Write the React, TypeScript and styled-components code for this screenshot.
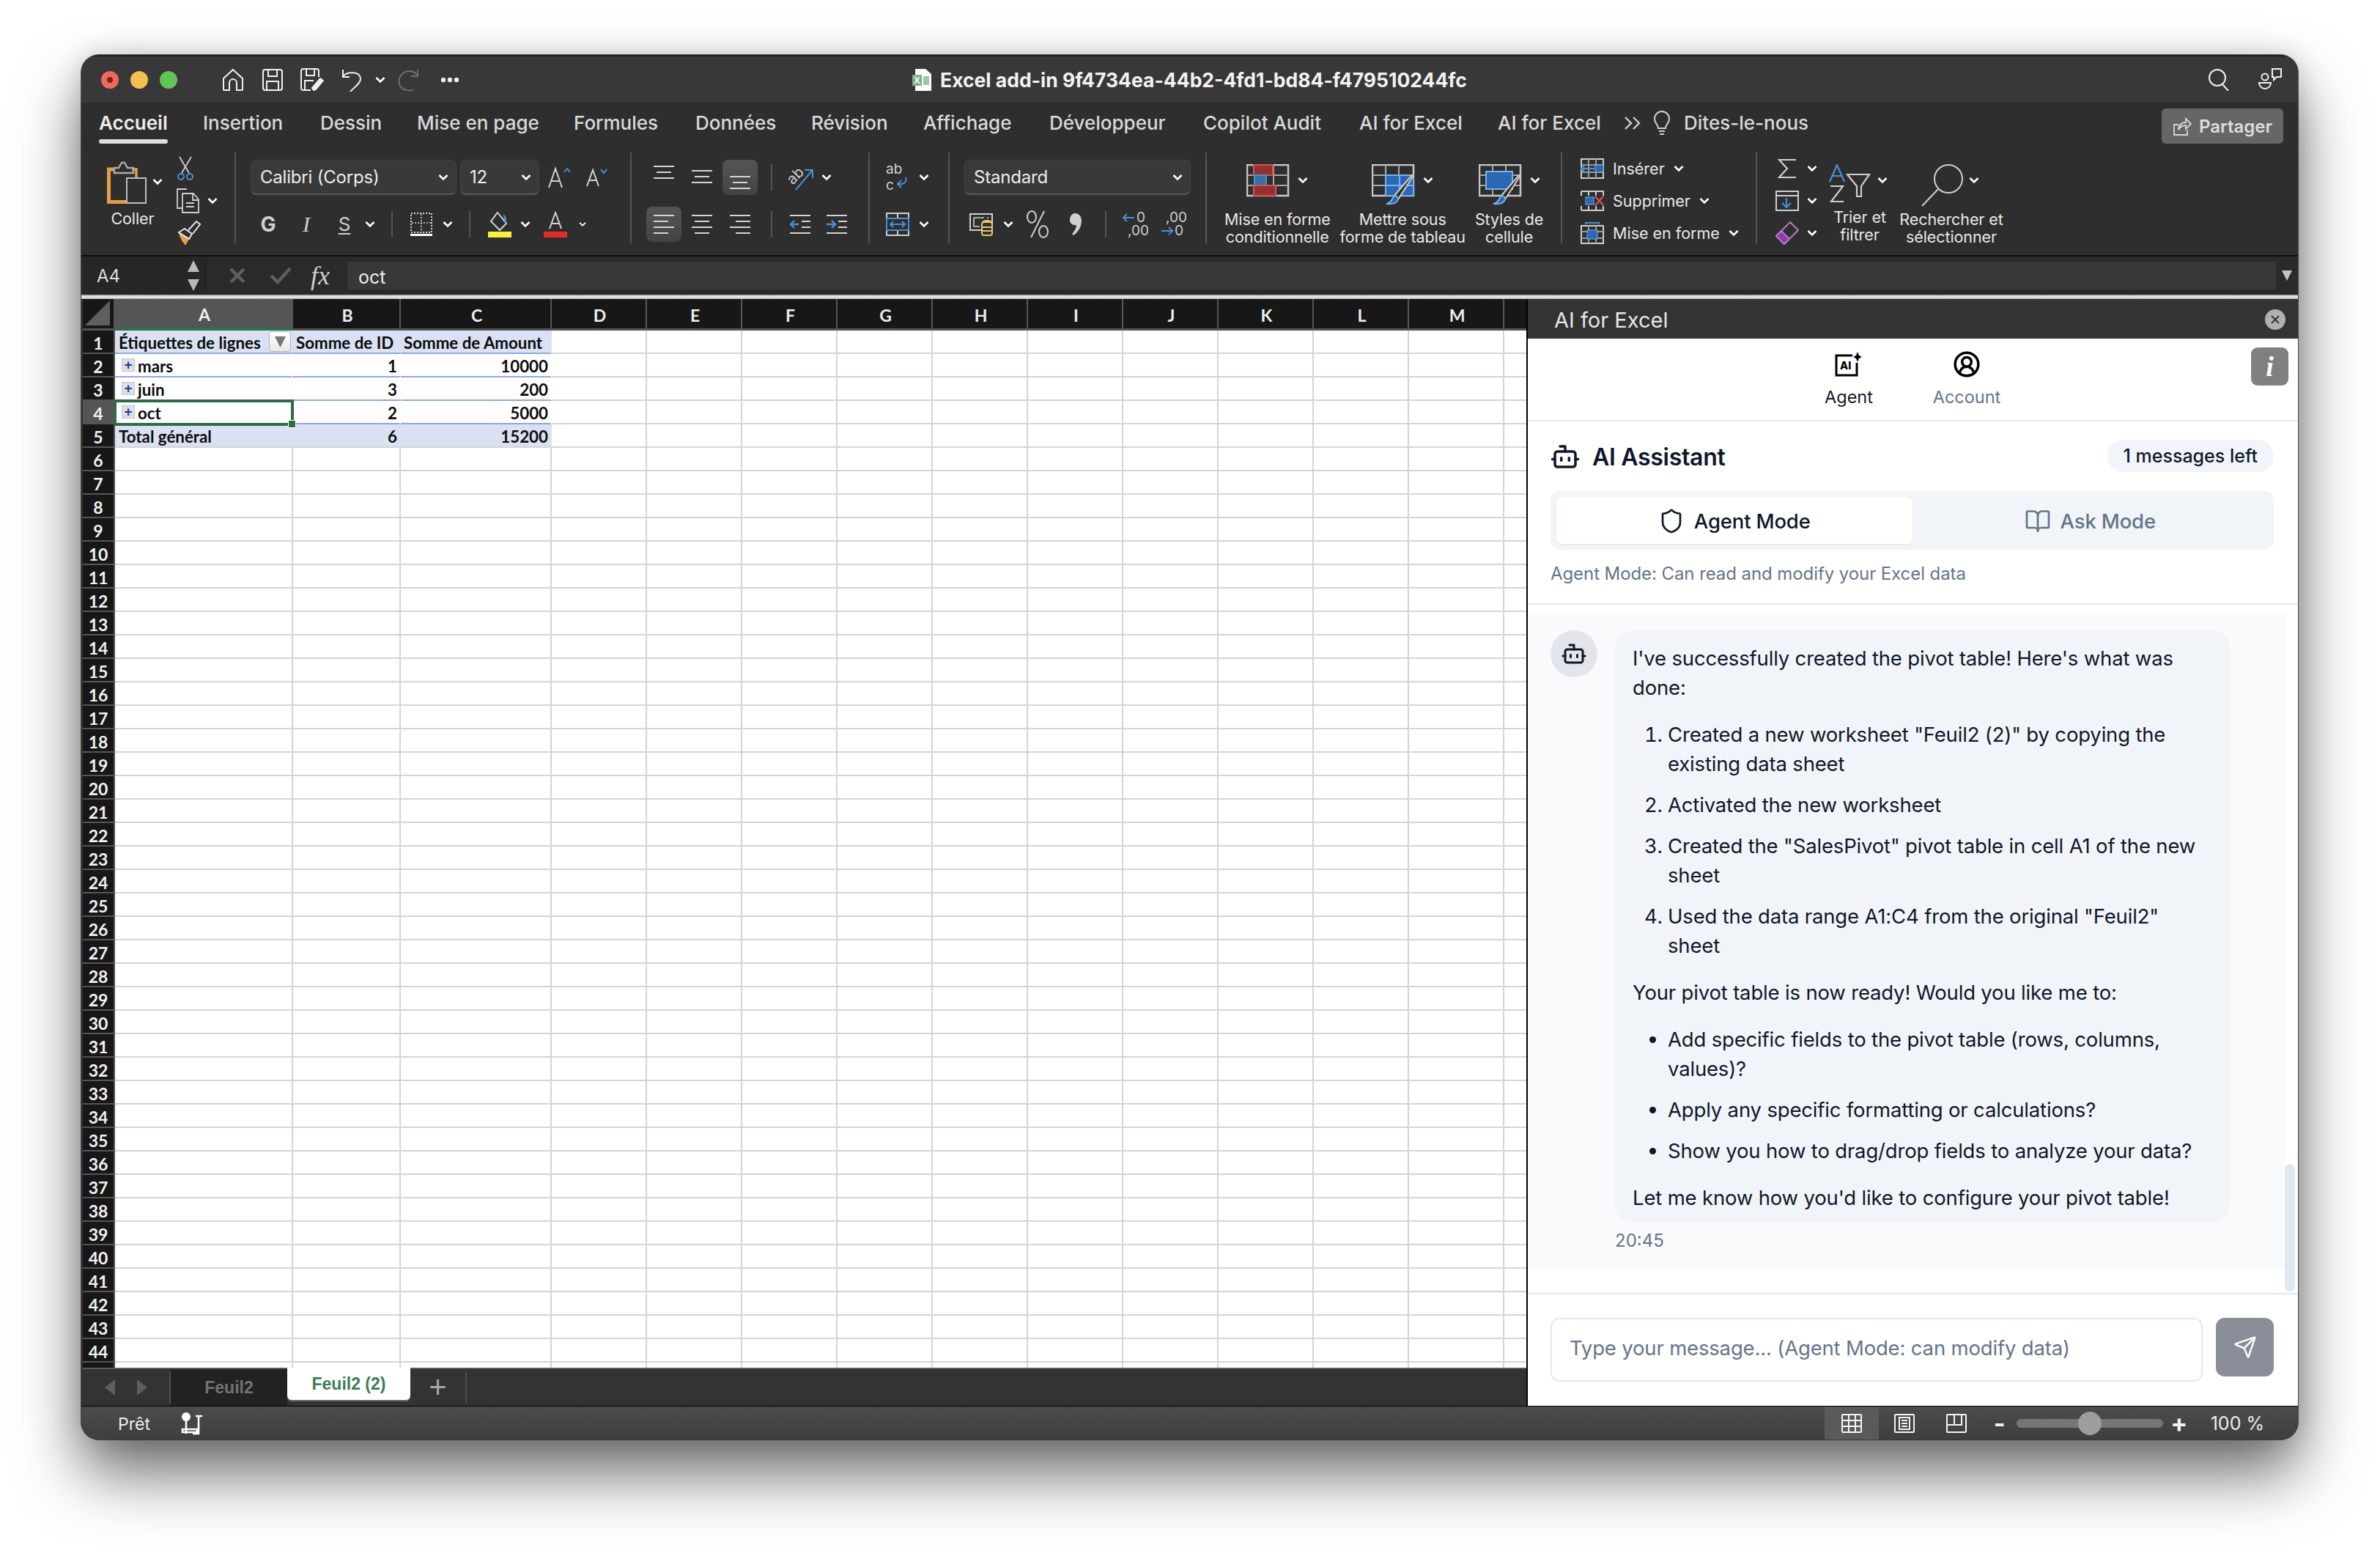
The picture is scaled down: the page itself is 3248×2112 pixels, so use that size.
import React from "react";
import styled, { createGlobalStyle } from "styled-components";
import { Bot, Shield, BookOpen, Send, CircleUserRound } from "lucide-react";

const Global = createGlobalStyle`
  html, body { margin: 0; padding: 0; background: #fff; overflow: hidden; }
  * { box-sizing: border-box; }
  body { font-family: Inter, "Liberation Sans", sans-serif; }
`;

const Page = styled.div`
  width: 3248px; height: 2112px; padding: 75px 0 0 111px; background: #fff; overflow: hidden;
`;
const Window = styled.div`
  width: 3025px; height: 1889px; border-radius: 24px; overflow: hidden; display: flex; flex-direction: column;
  background: #2e2e2e;
  box-shadow: 0 0 0 1px rgba(30,30,30,.7), 0 46px 86px rgba(0,0,0,.58), 0 0 36px rgba(0,0,0,.16);
`;

/* title bar */
const TitleBar = styled.div`
  flex: none; height: 65px; background: #383838; border-top: 2px solid #1e1e1e; display: grid; grid-template-columns: 1fr auto 1fr; align-items: center; color: #fff;
`;
const TitleLeft = styled.div`display: flex; align-items: center; padding-left: 27px;`;
const Light = styled.span<{ $c: string }>`
  width: 24px; height: 24px; border-radius: 50%; background: ${p => p.$c}; margin-right: 16px; flex: none;
  display: flex; align-items: center; justify-content: center;
`;
const LightDot = styled.span`width: 8px; height: 8px; border-radius: 50%; background: #8c1a12;`;
const TitleCenter = styled.div`display: flex; align-items: center; gap: 12px; font-weight: 700; font-size: 26.5px; color: #f2f2f2;`;
const TitleRight = styled.div`display: flex; align-items: center; justify-content: flex-end; padding-right: 21px; gap: 38px;`;
const Slot = styled.div<{ $w: number }>`
  flex: 0 0 ${p => p.$w}px; width: ${p => p.$w}px; display: flex; align-items: center; justify-content: center; height: 100%; color: #d6d6d6;
`;

/* ribbon tabs */
const TabsBar = styled.div`flex: none; height: 68px; padding-left: 24px; display: flex; align-items: flex-start;`;
const RibbonTab = styled.div<{ $w: number; $on?: boolean }>`
  flex: 0 0 ${p => p.$w}px; height: 60px; padding-top: 11px; font-size: 26px; line-height: 34px; font-weight: ${p => p.$on ? 600 : 500};
  color: ${p => p.$on ? "#ececec" : "#d9d9d9"}; white-space: nowrap; position: relative;
`;
const TabLine = styled.span`position: absolute; left: 0; top: 50px; width: 94px; height: 6px; border-radius: 3px; background: #dedede;`;
const TabIcon = styled.div<{ $w: number }>`flex: 0 0 ${p => p.$w}px; height: 56px; display: flex; align-items: center; color: #cfcfcf;`;
const ShareBtn = styled.div`
  margin: 8px 20px 0 auto; width: 166px; height: 48px; border-radius: 6px; background: #666; color: #dcdcdc;
  display: flex; align-items: center; justify-content: center; gap: 10px; font-weight: 600; font-size: 24px;
`;

/* ribbon */
const Ribbon = styled.div`flex: none; height: 140px; display: flex; align-items: flex-start;`;
const Group = styled.div<{ $w?: number; $pl?: number }>`
  ${p => p.$w ? `flex: 0 0 ${p.$w}px;` : "flex: 1;"} height: 124px; padding-left: ${p => p.$pl ?? 0}px;
  border-right: ${p => p.$w ? "2px solid #555" : "none"}; display: flex;
`;
const Stack = styled.div`display: flex; flex-direction: column; gap: 16px; padding-top: 10px;`;
const ToolRow = styled.div`display: flex; height: 48px; align-items: center;`;
const Select = styled.div<{ $w: number }>`
  width: ${p => p.$w}px; flex: none; height: 48px; border-radius: 8px; background: #393939; border: 1px solid #424242; border-bottom: 2px solid #585858;
  display: flex; align-items: center; justify-content: space-between; padding: 0 10px 0 12px; color: #ededed; font-size: 24px; letter-spacing: -.2px;
`;
const ToolBtn = styled.div<{ $on?: boolean }>`
  flex: 0 0 48px; height: 48px; border-radius: 8px; background: ${p => p.$on ? "linear-gradient(#555,#434343)" : "transparent"};
  display: flex; align-items: center; justify-content: center; margin-right: 4px; color: #d6d6d6;
`;
const VSep = styled.span`width: 2px; height: 36px; background: #555; display: block;`;
const Letter = styled.span<{ $b?: boolean; $i?: boolean; $u?: boolean; $f?: string; $s?: number }>`
  font-family: ${p => p.$f ?? "Inter"}, "Liberation Sans", sans-serif; font-size: ${p => p.$s ?? 28}px; color: #cfcfcf; line-height: 1;
  font-weight: ${p => p.$b ? 700 : 400}; font-style: ${p => p.$i ? "italic" : "normal"};
  text-decoration: ${p => p.$u ? "underline" : "none"}; text-underline-offset: 3px;
`;
const SmallLabel = styled.div`font-size: 21.5px; line-height: 24px; text-align: center; color: #e8e8e8; white-space: nowrap; letter-spacing: -.1px;`;
const PasteCol = styled.div`flex: 0 0 122px; padding: 10px 0 0 35px; display: flex; flex-direction: column;`;
const PasteTop = styled.div`display: flex; align-items: center; gap: 8px; height: 60px;`;
const PasteLabel = styled(SmallLabel)`width: 70px; margin-top: 8px;`;
const MiniCol = styled.div`display: flex; flex-direction: column; width: 84px; padding-left: 4px;`;
const MiniRow = styled.div`flex: 0 0 44px; display: flex; align-items: center; gap: 8px; padding-left: 4px;`;
const BigButtons = styled.div`display: flex; gap: 13px; padding-left: 24px;`;
const BigBtn = styled.div<{ $w: number }>`flex: 0 0 ${p => p.$w}px; display: flex; flex-direction: column; align-items: center; padding-top: 16px;`;
const BigTop = styled.div`height: 60px; width: 84px; display: flex; align-items: flex-start; gap: 8px; margin-bottom: 5px; white-space: nowrap;`;
const BigChev = styled.span`margin-top: 17px; display: flex; flex: none;`;
const CellCol = styled.div`display: flex; flex-direction: column; padding-left: 25px;`;
const CellRow = styled.div`flex: 0 0 44px; display: flex; align-items: center; gap: 12px; font-size: 21.5px; color: #e8e8e8; white-space: nowrap;`;
const EditCol = styled.div`display: flex; flex-direction: column; padding-left: 22px; width: 90px;`;
const EditRow = styled.div`flex: 0 0 44px; display: flex; align-items: center;`;

/* formula */
const DarkLine = styled.div`flex: none; height: 2px; background: #0d0d0d;`;
const FormulaBar = styled.div`flex: none; height: 52px; background: #2a2a2a; display: flex; align-items: center; color: #eee;`;
const NameBox = styled.div`
  flex: 0 0 169px; margin-left: 2px; height: 50px; background: #262626; font-size: 24px; padding-left: 19px; display: flex; align-items: center; justify-content: space-between; padding-right: 8px; color: #ddd; border-right: 2px solid #222;
`;
const Arrows = styled.div`display: flex; flex-direction: column; gap: 10px; width: 16px;`;
const FormulaIcons = styled.div`flex: 0 0 192px; min-width: 0; height: 100%; display: flex; align-items: center; color: #666;`;
const FormulaInput = styled.div`flex: 1; height: 38px; background: #383838; font-size: 25px; color: #eee; padding: 3px 0 0 15px; display: flex; align-items: center;`;
const DownTri = styled.div`flex: 0 0 30px; display: flex; justify-content: center;`;
const WhiteLine = styled.div`flex: none; height: 6px; background: linear-gradient(#8c8c8c,#e6e6e6 40%,#e6e6e6 70%,#9a9a9a);`;

/* workspace */
const Workspace = styled.div`flex: none; height: 1510px; display: flex; background: #000;`;
const SheetSide = styled.div`flex: 0 0 1972px; display: flex; flex-direction: column; padding-left: 2px; overflow: hidden; background: #333;`;
const Grid = styled.div`
  height: 1458px; overflow: hidden; display: grid; position: relative; background: #fff; align-content: start;
  grid-template-columns: 44px 243px 147px 206px repeat(11, 130px);
  grid-template-rows: 43px repeat(45, 32px);
  font-family: Lato, "Liberation Sans", sans-serif;
`;
const ColHead = styled.div<{ $on?: boolean }>`
  background: ${p => p.$on ? "#555" : "#171717"}; color: #eee; border-right: 2px solid #555; border-bottom: ${p => p.$on ? "4px solid #2f7048" : "3px solid #555"};
  display: flex; align-items: center; justify-content: center; font-size: 23px; font-weight: 700; padding: 3px 0 0 3px;
`;
const Corner = styled.div`background: #171717; border-right: 2px solid #555; border-bottom: 3px solid #555; display: flex; align-items: flex-end; justify-content: flex-end; padding: 0 5px 4px 0;`;
const RowHead = styled.div<{ $on?: boolean }>`
  background: ${p => p.$on ? "#555" : "#171717"}; color: #f2f2f2; border-bottom: 2px solid #555; border-right: 2px solid #555;
  display: flex; align-items: center; justify-content: center; font-size: 23px; font-weight: 700; padding-top: 3px;
`;
const Cell = styled.div<{ $kind: "plain" | "band" | "row" | "total"; $right?: boolean; $pad?: number }>`
  background: ${p => (p.$kind === "band" || p.$kind === "total") ? "#d9e1f2" : "#fff"};
  border-right: 2px solid ${p => p.$kind === "plain" ? "#d4d4d4" : "transparent"};
  border-bottom: 2px solid ${p => p.$kind === "plain" ? "#d4d4d4" : p.$kind === "total" ? "#d4d4d4" : "#8ea9db"};
  color: #0c0c0c; font-size: 22.3px; font-weight: 700; white-space: nowrap; display: flex; align-items: center; position: relative;
  justify-content: ${p => p.$right ? "flex-end" : "flex-start"}; padding: 3px ${p => p.$right ? 3 : 0}px 0 ${p => p.$pad ?? 4}px;
`;
const Expand = styled.span`
  width: 18px; height: 18px; margin: 0 4px 3px 5px; background: #dce0ea; border: 1px solid #bcc3d4; color: #2b3d7a; font: 700 19px/15px "Liberation Sans", sans-serif; text-align: center; flex: none;
`;
const FilterBtn = styled.div`
  position: absolute; right: 1px; top: 1px; width: 30px; height: 28px; background: linear-gradient(#fff,#e8e8e8); border: 1px solid #b5b5b5; border-radius: 3px; display: flex; align-items: center; justify-content: center;
`;
const Selection = styled.div`position: absolute; left: 42px; top: 137px; width: 246px; height: 36px; border: 4px solid #2f6b45; pointer-events: none;`;
const Handle = styled.span`position: absolute; right: -7px; bottom: -7px; width: 11px; height: 11px; background: #2f6b45; border: 1px solid #fff;`;

const SheetTabs = styled.div`flex: 1; background: #333; border-top: 2px solid #5a5a5a; display: flex; align-items: flex-start;`;
const SheetNav = styled.div`flex: 0 0 120px; height: 42px; margin-top: 4px; display: flex; align-items: center; gap: 30px; padding-left: 30px; border-right: 2px solid #4e4e4e;`;
const SheetTab = styled.div<{ $on?: boolean }>`
  flex: 0 0 ${p => p.$on ? 168 : 159}px; height: ${p => p.$on ? 44 : 50}px; margin-top: ${p => p.$on ? -2 : 0}px;
  background: ${p => p.$on ? "#fff" : "#222"}; color: ${p => p.$on ? "#3d7d57" : "#727272"};
  border-radius: ${p => p.$on ? "0 0 6px 6px" : "0"}; box-shadow: ${p => p.$on ? "0 2px 0 #666" : "none"};
  display: flex; align-items: center; justify-content: center; font-family: "Liberation Sans", sans-serif; font-weight: 700; font-size: 23px;
`;
const AddTab = styled.div`flex: 0 0 77px; height: 42px; margin-top: 4px; display: flex; align-items: center; justify-content: center; border-right: 2px solid #4e4e4e; font: 400 42px/1 "Liberation Sans", sans-serif; color: #a8a8a8;`;

/* panel */
const Panel = styled.div`flex: 1; background: #fff; border-left: 2px solid #000; display: flex; flex-direction: column; position: relative; color: #0f172a;`;
const PanelBar = styled.div`flex: none; height: 54px; background: #333; color: #e6e6e6; font-size: 29px; padding: 2px 17px 0 36px; display: flex; align-items: center; justify-content: space-between;`;
const CloseDot = styled.div`width: 28px; height: 28px; border-radius: 50%; background: #b0b0b0; display: flex; align-items: center; justify-content: center;`;
const PanelTabs = styled.div`flex: none; height: 113px; border-bottom: 2px solid #e2e8f0; display: flex; justify-content: center; padding: 18px 14px 0 0; position: relative;`;
const PanelTab = styled.div<{ $on?: boolean }>`
  width: 161px; display: flex; flex-direction: column; align-items: center; gap: 12px; font-size: 23.5px; line-height: 32px; color: ${p => p.$on ? "#0f172a" : "#64748b"};
`;
const PanelTabIcon = styled.div`height: 34px; display: flex; align-items: center; justify-content: center; color: #000;`;
const InfoBtn = styled.div`
  position: absolute; right: 13px; top: 12px; width: 51px; height: 52px; border-radius: 9px; background: #808080; color: #fff;
  font: italic 700 38px/52px "Liberation Serif", serif; text-align: center;
`;
const Head = styled.div`flex: none; height: 250px; padding: 25px 33px 0 31px; border-bottom: 2px solid #e2e8f0;`;
const HeadRow = styled.div`display: flex; justify-content: space-between; align-items: center; height: 44px;`;
const HeadTitle = styled.div`display: flex; align-items: center; gap: 16px; margin-left: -1px; padding-top: 2px; font-size: 32px; font-weight: 600; letter-spacing: -.3px;`;
const Badge = styled.div`height: 44px; padding: 0 22px; border-radius: 22px; background: #f1f5f9; font-size: 25px; font-weight: 500; display: flex; align-items: center;`;
const ModeBar = styled.div`margin-top: 26px; height: 80px; padding: 8px; border-radius: 12px; background: #f1f5f9; display: grid; grid-template-columns: 1fr 1fr;`;
const ModeBtn = styled.div<{ $on?: boolean }>`
  border-radius: 8px; background: ${p => p.$on ? "#fff" : "transparent"}; box-shadow: ${p => p.$on ? "0 1px 3px rgba(15,23,42,.08)" : "none"};
  color: ${p => p.$on ? "#0f172a" : "#64748b"}; display: flex; align-items: center; justify-content: center; gap: 13px; font-size: 27.5px; letter-spacing: -.17px; font-weight: 500; padding-top: 1px;
`;
const Hint = styled.div`margin-top: 17px; font-size: 24px; letter-spacing: -.08px; line-height: 32px; color: #64748b;`;
const Messages = styled.div`flex: none; height: 939px; padding-top: 11px; position: relative;`;
const MessagesInner = styled.div`width: 1035px; height: 896px; background: #f8fafc; padding: 24px 0 0 31px; display: flex; gap: 24px;`;
const Avatar = styled.div`flex: 0 0 64px; height: 64px; border-radius: 50%; background: #e2e6ea; display: flex; align-items: center; justify-content: center;`;
const BubbleCol = styled.div`width: 839px;`;
const Bubble = styled.div`
  background: #f1f5f9; border-radius: 24px; padding: 18px 24px 13px; font-size: 27.5px; letter-spacing: -.17px; line-height: 40px; color: #0f172a;
  p { margin: 0 0 24px; } p:last-child { margin: 0; }
  ol, ul { margin: 0 0 24px; padding-left: 48px; } li { margin-bottom: 16px; } li:last-child { margin-bottom: 0; }
`;
const Time = styled.div`margin-top: 10px; font-size: 24px; line-height: 32px; color: #64748b;`;
const ScrollThumb = styled.div`position: absolute; right: 4px; top: 763px; width: 14px; height: 174px; border-radius: 7px; background: #e2e8f0;`;
const Composer = styled.div`flex: 1; border-top: 2px solid #e2e8f0; padding: 32px 33px 0 31px; display: flex; gap: 18px; align-items: flex-start;`;
const Input = styled.textarea`
  width: 890px; height: 87px; border: 2px solid #e2e8f0; border-radius: 12px; padding: 19px 24px 0; font: 400 27.5px/40px Inter, sans-serif; letter-spacing: -.17px; resize: none; outline: none; color: #0f172a; background: #fff;
  &::placeholder { color: #64748b; opacity: 1; }
`;
const SendBtn = styled.div`flex: 0 0 79px; height: 80px; border-radius: 12px; background: #8a8e98; color: #fff; display: flex; align-items: center; justify-content: center;`;

/* status bar */
const StatusBar = styled.div`flex: none; flex-grow: 1; border-top: 1px solid #000; background: linear-gradient(#4c4c4c,#3e3e3e); display: flex; align-items: stretch; color: #eee; font-size: 23px;`;
const Ready = styled.div`flex: 0 0 125px; padding: 2px 0 0 50px; display: flex; align-items: center; font-weight: 400;`;
const StatusIcon = styled.div`display: flex; align-items: center; margin-left: 11px;`;
const StatusRight = styled.div`margin-left: auto; display: flex; align-items: stretch; padding-right: 46px;`;
const ViewBtn = styled.div<{ $w: number; $on?: boolean }>`flex: 0 0 ${p => p.$w}px; background: ${p => p.$on ? "#5a5a5a" : "transparent"}; display: flex; align-items: center; justify-content: center; font-size: 34px; font-weight: 700; color: #f2f2f2;`;
const Track = styled.div`flex: 0 0 200px; align-self: center; height: 12px; border-radius: 6px; background: #767676; position: relative;`;
const Thumb = styled.span`position: absolute; left: 84px; top: -10px; width: 32px; height: 32px; border-radius: 50%; background: #9d9d9d;`;
const Zoom = styled.div`margin-left: 21px; display: flex; align-items: center; font-size: 25px; white-space: nowrap;`;

const blue = "#4a90d2";

const Chev = ({ c = "#fff" }: { c?: string }) => (
  <svg width="14" height="10" viewBox="0 0 14 10" fill="none"><path d="M1.5 2L7 7.5 12.5 2" stroke={c} strokeWidth="2.6" /></svg>
);
const Home = () => (<svg width="30" height="32" viewBox="0 0 30 32" fill="none" stroke="#f0f0f0" strokeWidth="2"><path d="M15 2L2 14v15a1 1 0 001 1h7V20a5 5 0 0110 0v10h7a1 1 0 001-1V14z" /></svg>);
const SaveIco = () => (<svg width="28" height="30" viewBox="0 0 28 30" fill="none" stroke="#f0f0f0" strokeWidth="2"><rect x="1" y="1" width="26" height="28" rx="3" /><path d="M8 1v9h12V1M6 29V17h16v12" /></svg>);
const SaveEdit = () => (<svg width="32" height="32" viewBox="0 0 32 32" fill="none" stroke="#f0f0f0" strokeWidth="2"><path d="M14 30H4a3 3 0 01-3-3V4a3 3 0 013-3h18a3 3 0 013 3v8M8 1v9h11V1M6 30V17h12" /><path d="M18 30l-2-3 11-13 4 3-10 12z" fill="#f0f0f0" /></svg>);
const Undo = () => (<svg width="28" height="32" viewBox="0 0 28 32" fill="none" stroke="#f0f0f0" strokeWidth="2"><path d="M2 2v10h9M2 11c6-7 24-7 24 4 0 5-7 10-14 17" /></svg>);
const Redo = () => (<svg width="34" height="32" viewBox="0 0 34 32" fill="none" stroke="#6f6f6f" strokeWidth="2"><path d="M28 2v9h-9M28 10A14 14 0 105 26c4 4 12 6 17 3" /></svg>);
const Dots = () => (<svg width="26" height="8" viewBox="0 0 26 8" fill="#eee"><circle cx="4" cy="4" r="3.2" /><circle cx="13" cy="4" r="3.2" /><circle cx="22" cy="4" r="3.2" /></svg>);
const ExcelDoc = () => (<svg width="26" height="30" viewBox="0 0 26 30"><path d="M4 0h14l8 7v23H4z" fill="#fff" /><rect x="0" y="8" width="13" height="15" fill="#7fb08c" /><text x="2.5" y="20" fontSize="12" fill="#fff" fontFamily="Liberation Sans">X</text><path d="M15 10h8v12h-8z" fill="#9ec5a8" /></svg>);
const Search = ({ s = 30, c = "#f0f0f0" }: { s?: number; c?: string }) => (<svg width={s} height={s} viewBox="0 0 30 30" fill="none" stroke={c} strokeWidth="2"><circle cx="13" cy="12" r="11" /><path d="M20 21l8 9" /></svg>);
const People = () => (<svg width="34" height="32" viewBox="0 0 34 32" fill="none" stroke="#f0f0f0" strokeWidth="2"><circle cx="10" cy="12" r="4.5" /><path d="M2 20h16a8 8 0 01-16 0zM20 1h12v11h-6l-4 4v-4h-2z" /></svg>);
const Bulb = () => (<svg width="24" height="34" viewBox="0 0 24 34" fill="none" stroke="#cfcfcf" strokeWidth="2"><path d="M7 24c0-5-5-7-5-13a10 10 0 0120 0c0 6-5 8-5 13z" /><path d="M8 28h8M9 32h6" /></svg>);
const Share = () => (<svg width="26" height="28" viewBox="0 0 26 28" fill="none" stroke="#d8d8d8" strokeWidth="1.8"><path d="M8 12H2v14h18v-7" /><path d="M8 19c0-6 4-10 10-10V4l7 7-7 7v-5c-5 0-8 2-10 6z" /></svg>);
const Paste = () => (<svg width="54" height="60" viewBox="0 0 54 60" fill="none"><path d="M10 13H2.5v44.5H28" stroke="#e3a042" strokeWidth="5" /><path d="M34 13h6v12" stroke="#e3a042" strokeWidth="3.5" /><path d="M10 18v-7h6l4-7h4l4 7h8v7z" stroke="#a8a8a8" strokeWidth="2.5" /><rect x="27" y="25" width="26" height="34" fill="#2e2e2e" stroke="#bdbdbd" strokeWidth="2" /></svg>);
const Scissors = () => (<svg width="24" height="34" viewBox="0 0 24 34" fill="none"><path d="M4 1l13 22M20 1L7 23" stroke="#cfcfcf" strokeWidth="1.8" /><circle cx="6" cy="28" r="4" stroke={blue} strokeWidth="2" /><circle cx="18" cy="28" r="4" stroke={blue} strokeWidth="2" /></svg>);
const Copy = () => (<svg width="34" height="34" viewBox="0 0 34 34" fill="none" stroke="#cfcfcf" strokeWidth="1.8"><path d="M14 1H1v26h7" /><path d="M8 7h15l7 8v18H8zM22 7v9h8M13 20h11M13 25h11" /></svg>);
const Brush = () => (<svg width="34" height="36" viewBox="0 0 34 36" fill="none"><path d="M3 17l14 9-5 9C8 30 4 24 3 17z" fill="#e3a042" /><path d="M3 17l8-5 10 7-4 7z" stroke="#e8e8e8" strokeWidth="2" /><path d="M16 14l11-12 5 4-10 13" stroke="#e8e8e8" strokeWidth="2" /></svg>);
const FontUp = () => (<svg width="32" height="30" viewBox="0 0 32 30" fill="none"><path d="M2 29L11 3l9 26M5 20h12" stroke="#d0d0d0" strokeWidth="2" /><path d="M23 8l4-5 4 5" stroke={blue} strokeWidth="2" /></svg>);
const FontDown = () => (<svg width="30" height="26" viewBox="0 0 30 26" fill="none"><path d="M1 25L9 3l8 22M4 17h10" stroke="#d0d0d0" strokeWidth="2" /><path d="M20 2l4 5 4-5" stroke={blue} strokeWidth="2" /></svg>);
const Borders = () => (<svg width="30" height="32" viewBox="0 0 30 32" fill="none" stroke="#d8d8d8"><rect x="1" y="1" width="28" height="26" strokeDasharray="2 2" strokeWidth="2" /><path d="M15 2v24M2 14h26" strokeDasharray="2 2" strokeWidth="1.5" /><path d="M0 30.5h30" strokeWidth="3" stroke="#fff" /></svg>);
const Fill = () => (<svg width="34" height="36" viewBox="0 0 34 36"><path d="M14 2l12 15-9 9L5 14z" fill="none" stroke="#d0d0d0" strokeWidth="2" /><path d="M22 4c4 3 5 8 3 13-2-3-3-8-3-13z" fill={blue} /><rect x="1" y="28" width="32" height="8" fill="#f8f23e" /></svg>);
const FontColor = () => (<svg width="34" height="36" viewBox="0 0 34 36"><path d="M9 24L17 2l8 22M11 17h12" fill="none" stroke="#d0d0d0" strokeWidth="2" /><rect x="1" y="28" width="32" height="8" fill="#e22d24" /></svg>);
const AlignV = ({ top }: { top: number }) => (<svg width="28" height="48" viewBox="0 0 28 48" fill="none" stroke="#d4d4d4" strokeWidth="2"><path d={`M0 ${top}h28M4 ${top + 8}h20M0 ${top + 16}h28`} /></svg>);
const AlignH = ({ v }: { v: "l" | "c" | "r" }) => {
  const d = v === "l" ? "M0 2h28M0 10h20M0 18h28M0 26h20" : v === "c" ? "M0 2h28M4 10h20M0 18h28M4 26h20" : "M0 2h28M8 10h20M0 18h28M8 26h20";
  return <svg width="28" height="28" viewBox="0 0 28 28" fill="none" stroke="#d4d4d4" strokeWidth="2"><path d={d} /></svg>;
};
const Orient = () => (<svg width="48" height="48" viewBox="-4 -4 48 48"><text x="2" y="24" fontSize="20" fill="#cfcfcf" fontFamily="Inter" transform="rotate(-45 14 18)">ab</text><path d="M14 37L36 11M26 10h11v11" fill="none" stroke={blue} strokeWidth="2" /></svg>);
const Indent = ({ inc }: { inc: boolean }) => (<svg width="28" height="28" viewBox="0 0 28 28" fill="none"><path d="M0 2h28M0 26h28M16 10h12M16 18h12" stroke="#d4d4d4" strokeWidth="2" /><path d={inc ? "M0 14h11M7 9l5 5-5 5" : "M12 14H1M6 9l-5 5 5 5"} stroke={blue} strokeWidth="2.4" /></svg>);
const Wrap = () => (<svg width="36" height="50" viewBox="0 -6 36 50"><text x="2" y="14" fontSize="19" fill="#cfcfcf" fontFamily="Inter">ab</text><text x="2" y="36" fontSize="19" fill="#cfcfcf" fontFamily="Inter">c</text><path d="M29 19c2 7-3 10-11 9M23 23l-5 5 5 5" fill="none" stroke={blue} strokeWidth="2" /></svg>);
const Merge = () => (<svg width="32" height="32" viewBox="0 0 32 32" fill="none"><rect x="1" y="1" width="30" height="30" stroke="#cfcfcf" strokeWidth="2" /><path d="M16 1v6M16 25v6" stroke="#cfcfcf" strokeWidth="2" /><rect x="1" y="8" width="30" height="16" stroke={blue} strokeWidth="2" /><path d="M6 16h20M10 12l-4 4 4 4M22 12l4 4-4 4" stroke={blue} strokeWidth="2" /></svg>);
const Accounting = () => (<svg width="34" height="34" viewBox="0 0 34 34"><rect x="1" y="3" width="30" height="22" fill="none" stroke="#cfcfcf" strokeWidth="2" /><path d="M6 8h14M6 8v12h8M24 8h2" fill="none" stroke="#cfcfcf" strokeWidth="1.6" /><ellipse cx="24" cy="14" rx="7" ry="3" fill="#e6c76f" /><rect x="17" y="14" width="14" height="18" rx="3" fill="#2e2e2e" stroke="#e6c76f" strokeWidth="2" /><path d="M17 21h14M17 26h14" stroke="#e6c76f" strokeWidth="2" /></svg>);
const Comma = () => (<svg width="18" height="34" viewBox="0 0 18 34" fill="#cfcfcf"><path d="M8 2c5 0 9 4 9 10 0 9-5 16-11 20l-2-2c3-3 6-8 6-12-5 1-9-2-9-7 0-5 3-9 7-9z" /></svg>);
const Percent = () => (<svg width="32" height="40" viewBox="0 0 32 40" fill="none" stroke="#cfcfcf" strokeWidth="2"><ellipse cx="8" cy="10" rx="6" ry="8" /><ellipse cx="24" cy="30" rx="6" ry="8" /><path d="M25 2L7 38" /></svg>);
const Decimal = ({ more }: { more: boolean }) => (<svg width="36" height="46" viewBox="0 -5 36 46"><text x={more ? 20 : 8} y="15" fontSize="19" fill="#cfcfcf" fontFamily="Inter">{more ? "0" : ",00"}</text><text x={more ? 8 : 20} y="33" fontSize="19" fill="#cfcfcf" fontFamily="Inter">{more ? ",00" : "0"}</text><path d={more ? "M17 9H2M7 4L2 9l5 5" : "M2 27h15M12 22l5 5-5 5"} fill="none" stroke={blue} strokeWidth="2" /></svg>);
const TableBase = ({ children }: { children?: React.ReactNode }) => (
  <svg width="62" height="58" viewBox="0 0 62 58" fill="none">
    <rect x="1" y="1" width="56" height="42" stroke="#c9c9c9" strokeWidth="2.5" />
    <path d="M19 1v42M37 1v42M1 15h56M1 29h56" stroke="#a8a8a8" strokeWidth="2" />
    {children}
  </svg>
);
const BrushOver = () => (<g><path d="M30 44L54 16c2-2 3-1 2 1L36 48" fill="#2e2e2e" stroke="#cfcfcf" strokeWidth="2" /><path d="M20 54c6-1 8-6 10-10 3-2 6 0 6 4-2 6-10 7-16 6z" fill="#2b68b3" stroke="#7ab0e8" strokeWidth="2" /></g>);
const CondIcon = () => (<TableBase><rect x="10" y="1" width="26" height="14" fill="#943030" stroke="#c85a5a" strokeWidth="2" /><rect x="11" y="15" width="16" height="14" fill="#36709f" stroke="#4a90d2" strokeWidth="2" /><rect x="10" y="29" width="30" height="14" fill="#943030" stroke="#c85a5a" strokeWidth="2" /></TableBase>);
const TableIcon = () => (<TableBase><rect x="19" y="15" width="38" height="28" fill="#2b68b3" stroke="#7ab0e8" strokeWidth="2" /><path d="M38 15v28M19 29h38" stroke="#7ab0e8" strokeWidth="2" /><BrushOver /></TableBase>);
const StyleIcon = () => (<TableBase><rect x="10" y="10" width="36" height="24" fill="#2b68b3" stroke="#7ab0e8" strokeWidth="2" /><BrushOver /></TableBase>);
const InsertI = () => (<svg width="32" height="28" viewBox="0 0 32 28" fill="none"><rect x="1" y="1" width="30" height="26" stroke="#cfcfcf" strokeWidth="2" /><path d="M11 1v26M21 1v26M1 9h30M1 19h30" stroke="#9a9a9a" strokeWidth="2" /><rect x="20" y="9" width="11" height="10" fill="#2b68b3" stroke="#7ab0e8" /><path d="M19 14H1M7 8l-6 6 6 6" stroke={blue} strokeWidth="2.4" /></svg>);
const DeleteI = () => (<svg width="32" height="28" viewBox="0 0 32 28" fill="none"><path d="M1 1h30v6M1 27h30v-6M1 1v6M1 21v6M11 1v6M21 1v6M11 21v6M21 21v6" stroke="#cfcfcf" strokeWidth="2" /><rect x="7" y="9" width="11" height="10" fill="#2b68b3" stroke="#7ab0e8" /><path d="M20 8l11 12M31 8L20 20" stroke="#d9534f" strokeWidth="2.4" /></svg>);
const FormatI = () => (<svg width="32" height="30" viewBox="0 0 32 30" fill="none"><rect x="1" y="5" width="30" height="24" stroke="#cfcfcf" strokeWidth="2" /><path d="M11 5v24M21 5v24M1 13h30M1 22h30" stroke="#9a9a9a" strokeWidth="2" /><rect x="9" y="11" width="14" height="12" fill="#2b68b3" stroke="#7ab0e8" /><path d="M7 1h18M7 0v3M25 0v3" stroke={blue} strokeWidth="2" /></svg>);
const Sum = () => (<svg width="26" height="28" viewBox="0 0 26 28" fill="none" stroke="#cfcfcf" strokeWidth="2.2"><path d="M25 2H2l11 12L2 26h23" /></svg>);
const FillDown = () => (<svg width="32" height="28" viewBox="0 0 32 28" fill="none"><rect x="1" y="1" width="30" height="26" stroke="#cfcfcf" strokeWidth="2" /><path d="M1 7h30" stroke="#cfcfcf" strokeWidth="2" /><path d="M15 10v13M9 17l6 6 6-6" stroke={blue} strokeWidth="2.2" /></svg>);
const Eraser = () => (<svg width="32" height="32" viewBox="0 0 32 32" fill="none"><path d="M1 20L20 1l11 11-19 19z" stroke="#b978cf" strokeWidth="2" /><path d="M1 20l7-7 11 11-7 7z" fill="#8f3d9e" stroke="#b978cf" strokeWidth="2" /></svg>);
const Sort = () => (<svg width="58" height="54" viewBox="0 0 58 54"><path d="M1 24L11 1l10 23M5 16h12" fill="none" stroke={blue} strokeWidth="2.2" /><path d="M2 30h17L3 51h17" fill="none" stroke="#cfcfcf" strokeWidth="2.2" /><path d="M25 14h30L44 30v14h-6V30z" fill="none" stroke="#cfcfcf" strokeWidth="2.2" /></svg>);
const BigFind = () => (<svg width="58" height="58" viewBox="0 0 58 58" fill="none" stroke="#cfcfcf" strokeWidth="2"><ellipse cx="38" cy="20" rx="19" ry="19" /><path d="M24 34L2 57" /></svg>);
const ViewGrid = () => (<svg width="28" height="26" viewBox="0 0 28 26" fill="none" stroke="#f4f4f4" strokeWidth="2"><rect x="1" y="1" width="26" height="24" rx="1" /><path d="M10 1v24M19 1v24M1 9h26M1 17h26" /></svg>);
const ViewPage = () => (<svg width="28" height="26" viewBox="0 0 28 26" fill="none" stroke="#f4f4f4" strokeWidth="2"><rect x="1" y="1" width="26" height="24" rx="1" /><rect x="7" y="5" width="14" height="16" /><path d="M10 9h8M10 13h8M10 17h8" /></svg>);
const ViewBreak = () => (<svg width="28" height="26" viewBox="0 0 28 26" fill="none" stroke="#f4f4f4" strokeWidth="2"><rect x="1" y="1" width="26" height="24" rx="1" /><path d="M1 15h20V1M11 1v14" /></svg>);
const Macro = () => (<svg width="32" height="32" viewBox="0 0 32 32" fill="none"><circle cx="7" cy="7" r="6" fill="#fff" /><path d="M7 8v22M2 28h20v-4H2zM20 6h9M24 6v24h-8" stroke="#fff" strokeWidth="2.6" /></svg>);
const Tri = ({ dir, c, s = 14 }: { dir: "l" | "r" | "u" | "d"; c: string; s?: number }) => {
  const d = { l: "M14 0v22L0 11z", r: "M0 0v22l14-11z", u: "M7 0l7 14H0z", d: "M0 0h14L7 14z" }[dir];
  const vb = dir === "l" || dir === "r" ? "0 0 14 22" : "0 0 14 14";
  return <svg width={s} height={dir === "l" || dir === "r" ? s * 22 / 14 : s} viewBox={vb} fill={c}><path d={d} /></svg>;
};
const AgentIco = () => (<svg width="38" height="34" viewBox="0 0 38 34" fill="none"><path d="M24 5H2v27h28V15" stroke="#000" strokeWidth="3" /><text x="7" y="24" fontSize="14.5" fontWeight="800" fill="#000" fontFamily="Inter">AI</text><path d="M31 0l2 5 4 2-4 2-2 5-2-5-4-2 4-2z" fill="#000" /></svg>);

const TABS: [string, number][] = [["Insertion", 160], ["Dessin", 132], ["Mise en page", 214], ["Formules", 166], ["Données", 158], ["Révision", 153], ["Affichage", 172], ["Développeur", 210], ["Copilot Audit", 213], ["AI for Excel", 189], ["AI for Excel", 172]];
const COLS = ["A", "B", "C", "D", "E", "F", "G", "H", "I", "J", "K", "L", "M", ""];
const ROW_COUNT = 45;

type Data = { t?: string; right?: boolean; exp?: boolean; pad?: number; filter?: boolean };
const TABLE: Record<number, Data[]> = {
  1: [{ t: "Étiquettes de lignes", pad: 5, filter: true }, { t: "Somme de ID" }, { t: "Somme de Amount" }],
  2: [{ t: "mars", exp: true, pad: 4 }, { t: "1", right: true }, { t: "10000", right: true }],
  3: [{ t: "juin", exp: true, pad: 4 }, { t: "3", right: true }, { t: "200", right: true }],
  4: [{ t: "oct", exp: true, pad: 4 }, { t: "2", right: true }, { t: "5000", right: true }],
  5: [{ t: "Total général", pad: 5 }, { t: "6", right: true }, { t: "15200", right: true }],
};

const Sheet = () => {
  const cells: React.ReactNode[] = [];
  cells.push(<Corner key="c"><svg width="34" height="34" viewBox="0 0 34 34"><path d="M34 0v34H0z" fill="#5f5f5f" /></svg></Corner>);
  COLS.forEach((c, i) => cells.push(<ColHead key={`h${i}`} $on={i === 0}>{c}</ColHead>));
  for (let r = 1; r <= ROW_COUNT; r++) {
    cells.push(<RowHead key={`r${r}`} $on={r === 4}>{r < ROW_COUNT ? r : ""}</RowHead>);
    for (let c = 0; c < COLS.length; c++) {
      const d = TABLE[r]?.[c];
      if (!d) { cells.push(<Cell key={`${r}-${c}`} $kind="plain" />); continue; }
      const kind = r === 1 ? "band" : r === 5 ? "total" : "row";
      cells.push(
        <Cell key={`${r}-${c}`} $kind={kind} $right={d.right} $pad={d.pad}>
          {d.exp && <Expand>+</Expand>}
          {d.t}
          {d.filter && <FilterBtn><Tri dir="d" c="#777" s={15} /></FilterBtn>}
        </Cell>
      );
    }
  }
  return <Grid>{cells}<Selection><Handle /></Selection></Grid>;
};

export default function App() {
  return (
    <Page>
      <Global />
      <Window>
        <TitleBar>
          <TitleLeft>
            <Light $c="#ec6a5e"><LightDot /></Light>
            <Light $c="#f4bf4f" />
            <Light $c="#61c554" />
            <Slot $w={33} />
            <Slot $w={54}><Home /></Slot>
            <Slot $w={54}><SaveIco /></Slot>
            <Slot $w={54}><SaveEdit /></Slot>
            <Slot $w={54}><Undo /></Slot>
            <Slot $w={24}><Chev /></Slot>
            <Slot $w={56}><Redo /></Slot>
            <Slot $w={54}><Dots /></Slot>
          </TitleLeft>
          <TitleCenter><ExcelDoc />Excel add-in 9f4734ea-44b2-4fd1-bd84-f479510244fc</TitleCenter>
          <TitleRight><Search /><People /></TitleRight>
        </TitleBar>

        <TabsBar>
          <RibbonTab $w={142} $on>Accueil<TabLine /></RibbonTab>
          {TABS.map(([t, w], i) => <RibbonTab key={i} $w={w}>{t}</RibbonTab>)}
          <TabIcon $w={40}><svg width="24" height="20" viewBox="0 0 24 20" fill="none" stroke="#cfcfcf" strokeWidth="2.4"><path d="M2 2l8 8-8 8M13 2l8 8-8 8" /></svg></TabIcon>
          <TabIcon $w={42}><Bulb /></TabIcon>
          <RibbonTab $w={170}>Dites-le-nous</RibbonTab>
          <ShareBtn><Share />Partager</ShareBtn>
        </TabsBar>

        <Ribbon>
          <Group $w={211}>
            <PasteCol>
              <PasteTop><Paste /><Chev /></PasteTop>
              <PasteLabel>Coller</PasteLabel>
            </PasteCol>
            <MiniCol>
              <MiniRow><Scissors /></MiniRow>
              <MiniRow><Copy /><Chev /></MiniRow>
              <MiniRow><Brush /></MiniRow>
            </MiniCol>
          </Group>

          <Group $w={540} $pl={20}>
            <Stack>
              <ToolRow>
                <Select $w={281}>Calibri (Corps)<Chev /></Select>
                <Slot $w={5} />
                <Select $w={108}>12<Chev /></Select>
                <Slot $w={54}><FontUp /></Slot>
                <Slot $w={50}><FontDown /></Slot>
              </ToolRow>
              <ToolRow>
                <Slot $w={48}><Letter $b>G</Letter></Slot>
                <Slot $w={56}><Letter $i $f="Liberation Serif" $s={30}>I</Letter></Slot>
                <Slot $w={48}><Letter $u $s={26}>S</Letter></Slot>
                <Slot $w={22}><Chev /></Slot>
                <Slot $w={38}><VSep /></Slot>
                <Slot $w={42}><Borders /></Slot>
                <Slot $w={30}><Chev /></Slot>
                <Slot $w={30}><VSep /></Slot>
                <Slot $w={52}><Fill /></Slot>
                <Slot $w={18}><Chev /></Slot>
                <Slot $w={64}><FontColor /></Slot>
                <Slot $w={10}><Chev /></Slot>
              </ToolRow>
            </Stack>
          </Group>

          <Group $w={325} $pl={20}>
            <Stack>
              <ToolRow>
                <ToolBtn><AlignV top={9} /></ToolBtn>
                <ToolBtn><AlignV top={15} /></ToolBtn>
                <ToolBtn $on><AlignV top={23} /></ToolBtn>
                <Slot $w={30}><VSep /></Slot>
                <Slot $w={48}><Orient /></Slot>
                <Slot $w={24}><Chev /></Slot>
              </ToolRow>
              <ToolRow>
                <ToolBtn $on><AlignH v="l" /></ToolBtn>
                <ToolBtn><AlignH v="c" /></ToolBtn>
                <ToolBtn><AlignH v="r" /></ToolBtn>
                <Slot $w={30}><VSep /></Slot>
                <Slot $w={48}><Indent inc={false} /></Slot>
                <Slot $w={52}><Indent inc /></Slot>
              </ToolRow>
            </Stack>
          </Group>

          <Group $w={109} $pl={14}>
            <Stack>
              <ToolRow><Slot $w={48}><Wrap /></Slot><Slot $w={24}><Chev /></Slot></ToolRow>
              <ToolRow><Slot $w={48}><Merge /></Slot><Slot $w={24}><Chev /></Slot></ToolRow>
            </Stack>
          </Group>

          <Group $w={351} $pl={20}>
            <Stack>
              <ToolRow><Select $w={309}>Standard<Chev /></Select></ToolRow>
              <ToolRow>
                <Slot $w={48}><Accounting /></Slot>
                <Slot $w={24}><Chev /></Slot>
                <Slot $w={56}><Percent /></Slot>
                <Slot $w={48}><Comma /></Slot>
                <Slot $w={34}><VSep /></Slot>
                <Slot $w={46}><Decimal more /></Slot>
                <Slot $w={58}><Decimal more={false} /></Slot>
              </ToolRow>
            </Stack>
          </Group>

          <Group $w={485}>
            <BigButtons>
              <BigBtn $w={144}>
                <BigTop><CondIcon /><BigChev><Chev /></BigChev></BigTop>
                <SmallLabel>Mise en forme<br />conditionnelle</SmallLabel>
              </BigBtn>
              <BigBtn $w={170}>
                <BigTop><TableIcon /><BigChev><Chev /></BigChev></BigTop>
                <SmallLabel>Mettre sous<br />forme de tableau</SmallLabel>
              </BigBtn>
              <BigBtn $w={92}>
                <BigTop><StyleIcon /><BigChev><Chev /></BigChev></BigTop>
                <SmallLabel>Styles de<br />cellule</SmallLabel>
              </BigBtn>
            </BigButtons>
          </Group>

          <Group $w={266}>
            <CellCol>
              <CellRow><InsertI />Insérer<Chev /></CellRow>
              <CellRow><DeleteI />Supprimer<Chev /></CellRow>
              <CellRow><FormatI />Mise en forme<Chev /></CellRow>
            </CellCol>
          </Group>

          <Group>
            <EditCol>
              <EditRow><Slot $w={38}><Sum /></Slot><Slot $w={30}><Chev /></Slot></EditRow>
              <EditRow><Slot $w={38}><FillDown /></Slot><Slot $w={30}><Chev /></Slot></EditRow>
              <EditRow><Slot $w={38}><Eraser /></Slot><Slot $w={30}><Chev /></Slot></EditRow>
            </EditCol>
            <BigBtn $w={100}>
              <BigTop><Sort /><BigChev><Chev /></BigChev></BigTop>
              <SmallLabel>Trier et<br />filtrer</SmallLabel>
            </BigBtn>
            <BigBtn $w={150}>
              <BigTop><BigFind /><BigChev><Chev /></BigChev></BigTop>
              <SmallLabel>Rechercher et<br />sélectionner</SmallLabel>
            </BigBtn>
          </Group>
        </Ribbon>

        <DarkLine />
        <FormulaBar>
          <NameBox>A4<Arrows><Tri dir="u" c="#b9b9b9" s={16} /><Tri dir="d" c="#b9b9b9" s={16} /></Arrows></NameBox>
          <FormulaIcons>
            <Slot $w={84}><svg width="22" height="22" viewBox="0 0 22 22" fill="none" stroke="#5e5e5e" strokeWidth="4.5"><path d="M2 2l18 18M20 2L2 20" /></svg></Slot>
            <Slot $w={34}><svg width="30" height="24" viewBox="0 0 30 24" fill="none" stroke="#5e5e5e" strokeWidth="4.5"><path d="M2 12l9 9L28 2" /></svg></Slot>
            <Slot $w={74}><Letter $i $f="Liberation Serif" $s={36}>fx</Letter></Slot>
          </FormulaIcons>
          <FormulaInput>oct</FormulaInput>
          <DownTri><Tri dir="d" c="#c4c4c4" s={14} /></DownTri>
        </FormulaBar>
        <WhiteLine />

        <Workspace>
          <SheetSide>
            <Sheet />
            <SheetTabs>
              <SheetNav><Tri dir="l" c="#5e5e5e" /><Tri dir="r" c="#5e5e5e" /></SheetNav>
              <SheetTab>Feuil2</SheetTab>
              <SheetTab $on>Feuil2 (2)</SheetTab>
              <AddTab>+</AddTab>
            </SheetTabs>
          </SheetSide>

          <Panel>
            <PanelBar>AI for Excel<CloseDot><svg width="12" height="12" viewBox="0 0 12 12" fill="none" stroke="#333" strokeWidth="2"><path d="M1 1l10 10M11 1L1 11" /></svg></CloseDot></PanelBar>
            <PanelTabs>
              <PanelTab $on><PanelTabIcon><AgentIco /></PanelTabIcon>Agent</PanelTab>
              <PanelTab><PanelTabIcon><CircleUserRound size={38} strokeWidth={2.2} /></PanelTabIcon>Account</PanelTab>
              <InfoBtn>i</InfoBtn>
            </PanelTabs>
            <Head>
              <HeadRow>
                <HeadTitle><Bot size={42} strokeWidth={2} />AI Assistant</HeadTitle>
                <Badge>1 messages left</Badge>
              </HeadRow>
              <ModeBar>
                <ModeBtn $on><Shield size={36} strokeWidth={1.8} />Agent Mode</ModeBtn>
                <ModeBtn><BookOpen size={36} strokeWidth={1.8} />Ask Mode</ModeBtn>
              </ModeBar>
              <Hint>Agent Mode: Can read and modify your Excel data</Hint>
            </Head>
            <Messages>
              <MessagesInner>
                <Avatar><Bot size={36} strokeWidth={2} /></Avatar>
                <BubbleCol>
                  <Bubble>
                    <p>I've successfully created the pivot table! Here's what was done:</p>
                    <ol>
                      <li>Created a new worksheet "Feuil2 (2)" by copying the existing data sheet</li>
                      <li>Activated the new worksheet</li>
                      <li>Created the "SalesPivot" pivot table in cell A1 of the new sheet</li>
                      <li>Used the data range A1:C4 from the original "Feuil2" sheet</li>
                    </ol>
                    <p>Your pivot table is now ready! Would you like me to:</p>
                    <ul>
                      <li>Add specific fields to the pivot table (rows, columns, values)?</li>
                      <li>Apply any specific formatting or calculations?</li>
                      <li>Show you how to drag/drop fields to analyze your data?</li>
                    </ul>
                    <p>Let me know how you'd like to configure your pivot table!</p>
                  </Bubble>
                  <Time>20:45</Time>
                </BubbleCol>
              </MessagesInner>
              <ScrollThumb />
            </Messages>
            <Composer>
              <Input placeholder="Type your message... (Agent Mode: can modify data)" />
              <SendBtn><Send size={32} strokeWidth={1.8} /></SendBtn>
            </Composer>
          </Panel>
        </Workspace>

        <StatusBar>
          <Ready>Prêt</Ready>
          <StatusIcon><Macro /></StatusIcon>
          <StatusRight>
            <ViewBtn $w={74} $on><ViewGrid /></ViewBtn>
            <ViewBtn $w={70}><ViewPage /></ViewBtn>
            <ViewBtn $w={72}><ViewBreak /></ViewBtn>
            <ViewBtn $w={46}>-</ViewBtn>
            <Track><Thumb /></Track>
            <ViewBtn $w={44}>+</ViewBtn>
            <Zoom>100 %</Zoom>
          </StatusRight>
        </StatusBar>
      </Window>
    </Page>
  );
}
